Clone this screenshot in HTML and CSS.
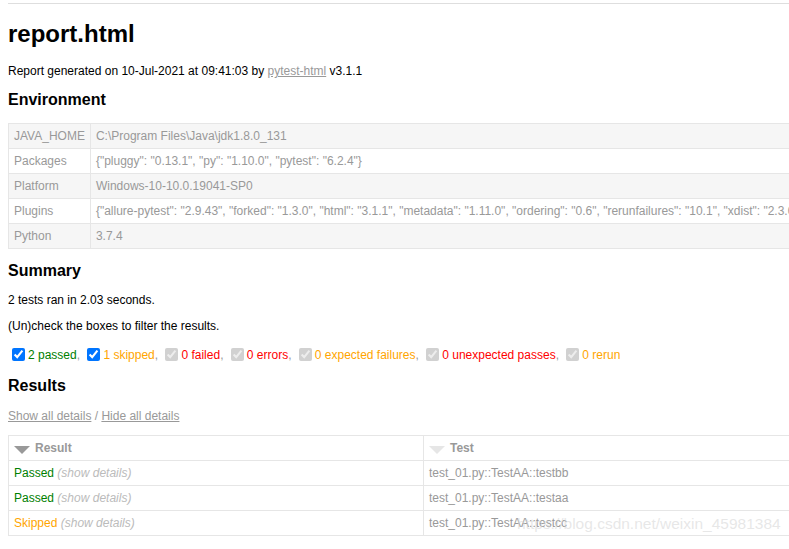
FILE: index.html
```html
<!DOCTYPE html>
<html>
<head>
    <meta charset="utf-8">
    <title>Test Report</title>
    <link rel="stylesheet" href="styles.css">
</head>
<body>
    <div class="edge"></div>
    <h1>report.html</h1>
    <p>Report generated on 10-Jul-2021 at 09:41:03 by <a href="#">pytest-html</a> v3.1.1</p>

    <h2>Environment</h2>
    <table id="environment">
        <tr>
            <td>JAVA_HOME</td>
            <td>C:\Program Files\Java\jdk1.8.0_131</td>
        </tr>
        <tr>
            <td>Packages</td>
            <td>{"pluggy": "0.13.1", "py": "1.10.0", "pytest": "6.2.4"}</td>
        </tr>
        <tr>
            <td>Platform</td>
            <td>Windows-10-10.0.19041-SP0</td>
        </tr>
        <tr>
            <td>Plugins</td>
            <td>{"allure-pytest": "2.9.43", "forked": "1.3.0", "html": "3.1.1", "metadata": "1.11.0", "ordering": "0.6", "rerunfailures": "10.1", "xdist": "2.3.0"}</td>
        </tr>
        <tr>
            <td>Python</td>
            <td>3.7.4</td>
        </tr>
    </table>

    <h2>Summary</h2>
    <p>2 tests ran in 2.03 seconds. </p>
    <p class="filter">(Un)check the boxes to filter the results.</p>
    <input checked class="filter" name="filter_checkbox" type="checkbox"><span class="passed">2 passed</span>,
    <input checked class="filter" name="filter_checkbox" type="checkbox"><span class="skipped">1 skipped</span>,
    <input checked class="filter" disabled name="filter_checkbox" type="checkbox"><span class="failed">0 failed</span>,
    <input checked class="filter" disabled name="filter_checkbox" type="checkbox"><span class="error">0 errors</span>,
    <input checked class="filter" disabled name="filter_checkbox" type="checkbox"><span class="xfailed">0 expected failures</span>,
    <input checked class="filter" disabled name="filter_checkbox" type="checkbox"><span class="xpassed">0 unexpected passes</span>,
    <input checked class="filter" disabled name="filter_checkbox" type="checkbox"><span class="rerun">0 rerun</span>

    <h2>Results</h2>
    <p class="details"><a href="#">Show all details</a>&nbsp;/&nbsp;<a href="#">Hide all details</a></p>
    <table id="results-table">
        <thead>
            <tr>
                <th class="col-result sortable desc active"><div class="sort-icon"></div>Result</th>
                <th class="col-name sortable inactive"><div class="sort-icon"></div>Test</th>
                <th class="col-duration sortable inactive"><div class="sort-icon"></div>Duration</th>
                <th class="col-links">Links</th>
            </tr>
        </thead>
        <tbody class="passed">
            <tr>
                <td class="col-result">Passed<span class="expander"> (show details)</span></td>
                <td class="col-name">test_01.py::TestAA::testbb</td>
                <td class="col-duration">1.00</td>
                <td class="col-links"></td>
            </tr>
        </tbody>
        <tbody class="passed">
            <tr>
                <td class="col-result">Passed<span class="expander"> (show details)</span></td>
                <td class="col-name">test_01.py::TestAA::testaa</td>
                <td class="col-duration">1.00</td>
                <td class="col-links"></td>
            </tr>
        </tbody>
        <tbody class="skipped">
            <tr>
                <td class="col-result">Skipped<span class="expander"> (show details)</span></td>
                <td class="col-name">test_01.py::TestAA::testcc</td>
                <td class="col-duration">0.00</td>
                <td class="col-links"></td>
            </tr>
        </tbody>
    </table>
    <div class="watermark">https://blog.csdn.net/weixin_45981384</div>
</body>
</html>
```

FILE: styles.css
```css
html {
    overflow: hidden;
}

body {
    font-family: Helvetica, "Liberation Sans", Arial, sans-serif;
    font-size: 12px;
    min-width: 1000px;
    color: #999;
    margin: 0 8px 8px;
    position: relative;
}

.edge {
    height: 3px;
    border-bottom: 1px solid #dedede;
    margin: 0 -8px;
}

h1 {
    font-size: 24px;
    color: black;
}

h2 {
    font-size: 16px;
    color: black;
}

p {
    color: black;
}

a {
    color: #999;
}

table {
    border-collapse: collapse;
}

/* Environment */

#environment td {
    padding: 5px;
    border: 1px solid #e6e6e6;
    white-space: nowrap;
}

#environment tr:nth-child(odd) {
    background-color: #f6f6f6;
}

/* Summary */

input.filter {
    margin: 3px 3px 3px 4px;
    vertical-align: -2px;
    width: 13px;
    height: 13px;
}

span.passed, .passed .col-result {
    color: green;
}

span.skipped, span.xfailed, span.rerun, .skipped .col-result {
    color: orange;
}

span.error, span.failed, span.xpassed {
    color: red;
}

/* Results */

p.details {
    color: #999;
}

#results-table {
    border: 1px solid #e6e6e6;
    color: #999;
    font-size: 12px;
    width: 1200px;
    table-layout: fixed;
}

#results-table th,
#results-table td {
    padding: 5px;
    border: 1px solid #e6e6e6;
    text-align: left;
    white-space: nowrap;
}

#results-table th {
    font-weight: bold;
}

#results-table th.col-result {
    width: 404px;
}

#results-table th.col-name {
    width: 500px;
}

.col-name {
    color: #999;
}

.expander {
    color: #bbb;
    font-style: italic;
    cursor: pointer;
}

.sortable {
    cursor: pointer;
}

.sort-icon {
    float: left;
    margin-right: 5px;
    margin-top: 5px;
    width: 0;
    height: 0;
    border-left: 8px solid transparent;
    border-right: 8px solid transparent;
}

.inactive .sort-icon {
    border-top: 8px solid #e6e6e6;
}

.desc.active .sort-icon {
    border-top: 8px solid #999;
}

.watermark {
    position: absolute;
    left: 509px;
    top: 515px;
    font-size: 15.5px;
    color: rgba(215, 215, 215, 0.6);
    white-space: nowrap;
}
```
